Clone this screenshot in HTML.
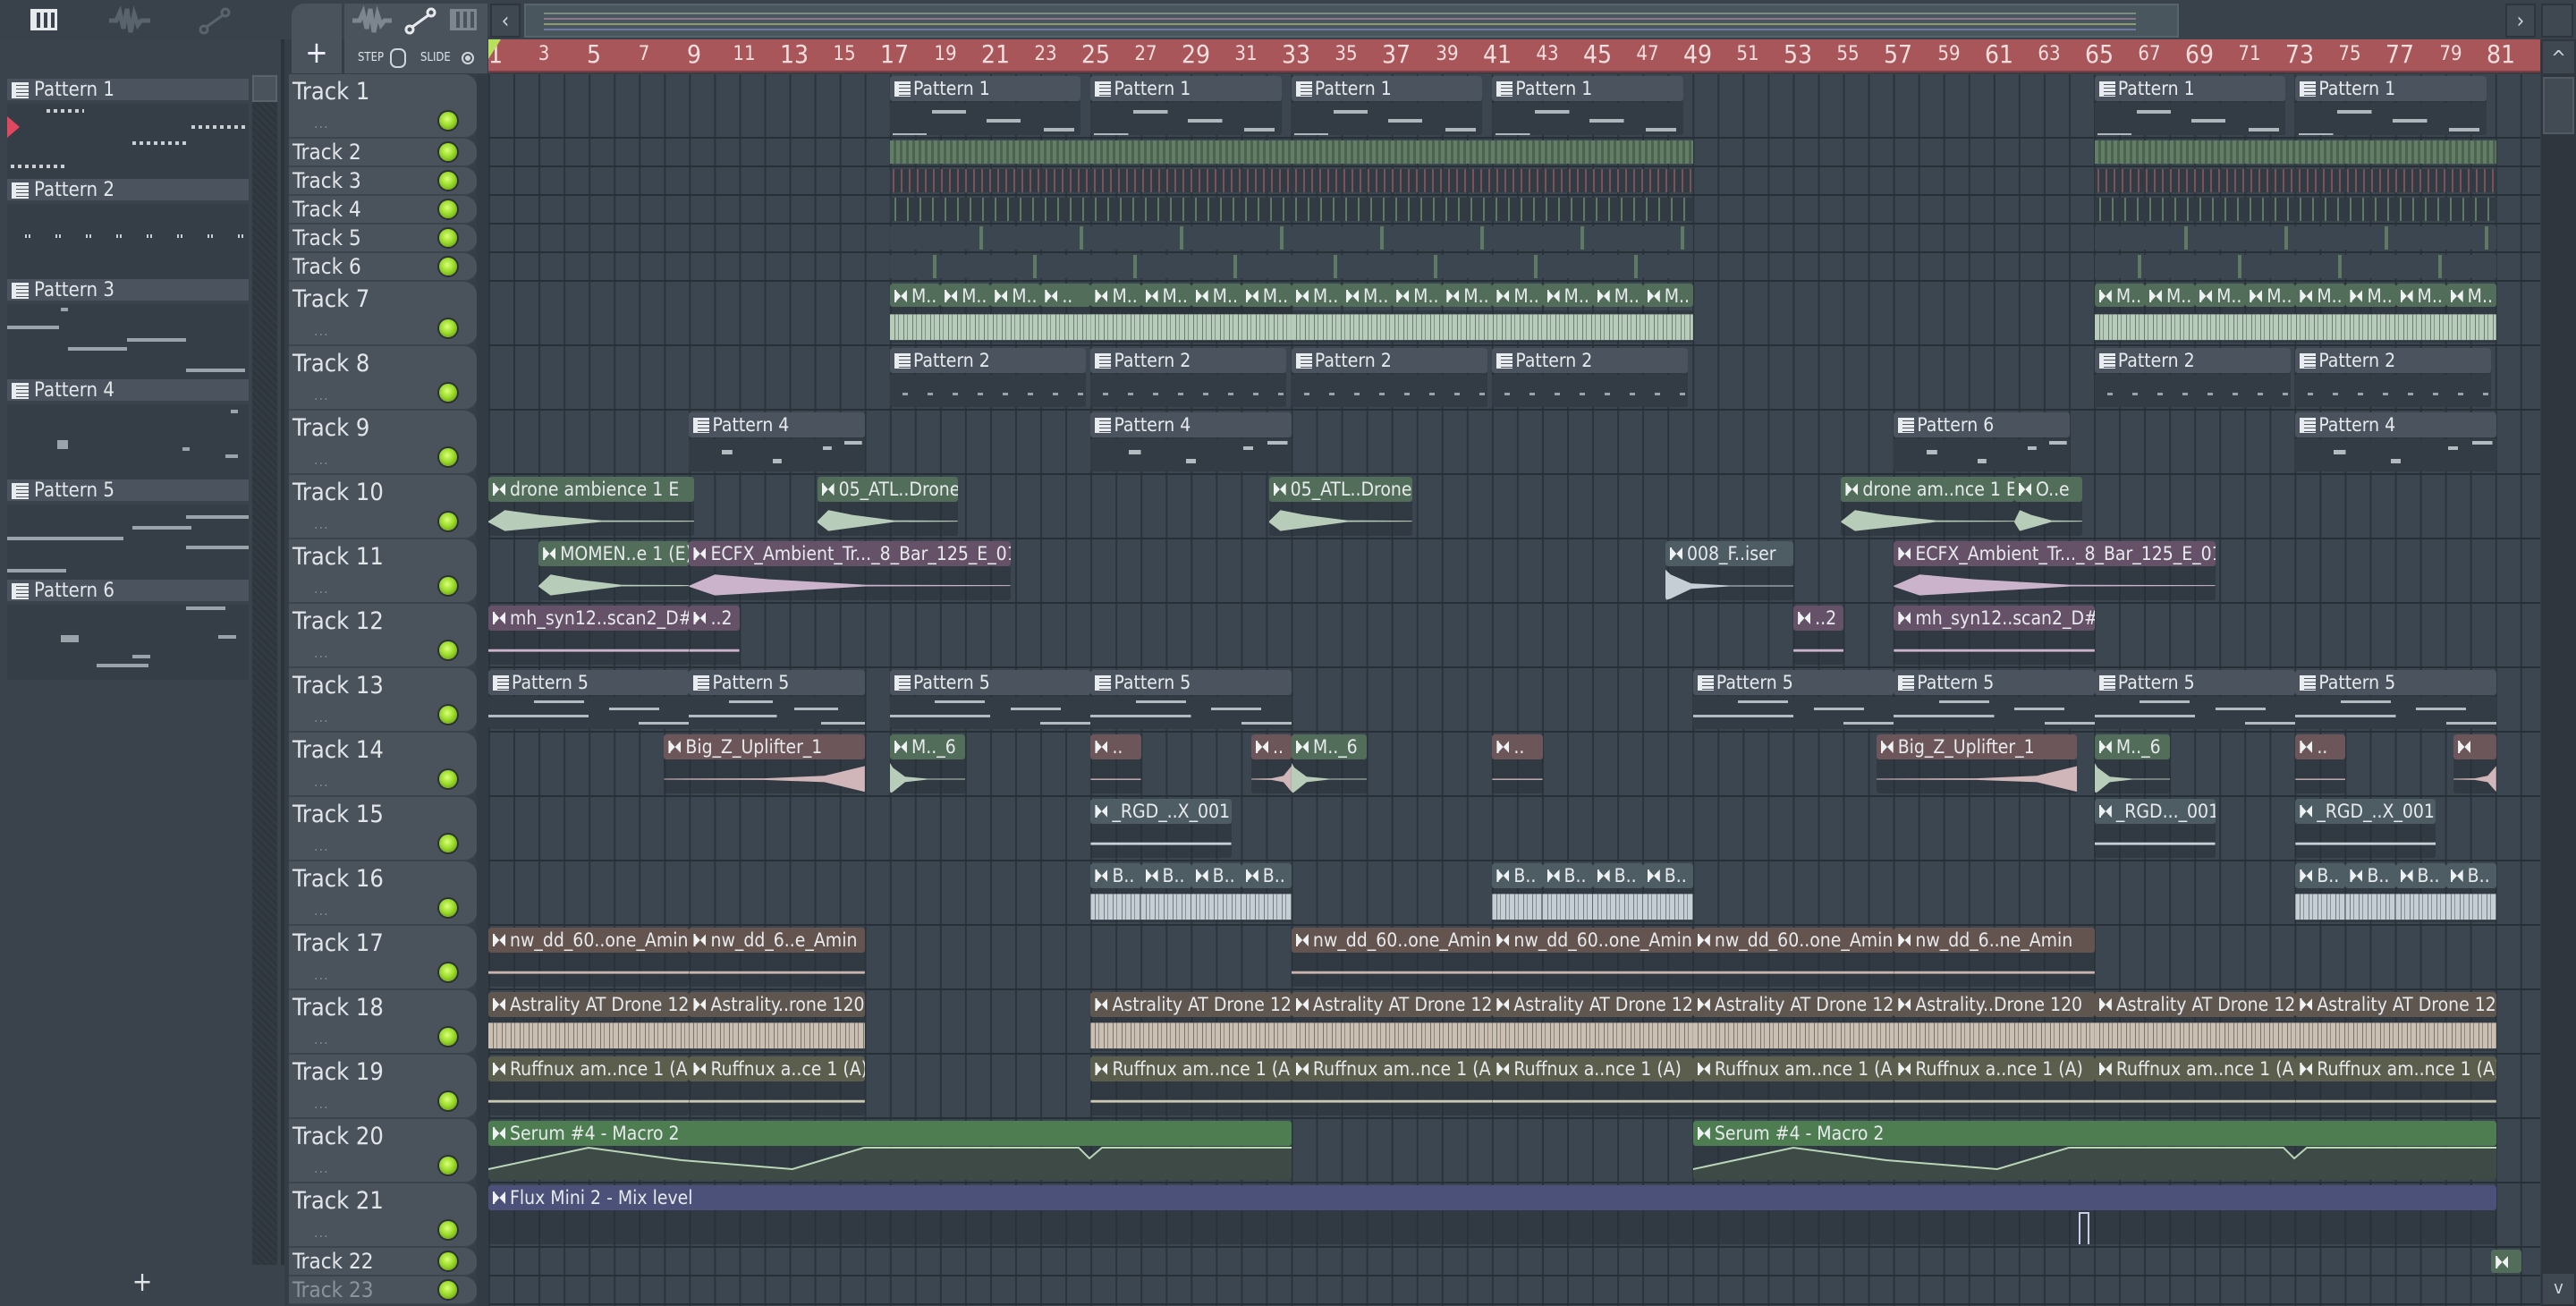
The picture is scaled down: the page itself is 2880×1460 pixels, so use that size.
<!DOCTYPE html>
<html><head><meta charset="utf-8">
<style>
*{box-sizing:border-box;margin:0;padding:0}
body{width:2880px;height:1460px;overflow:hidden;background:#353d46;font-family:"Liberation Sans Narrow","DejaVu Sans Condensed","Liberation Sans",sans-serif;font-stretch:condensed;position:relative}
.abs{position:absolute}
#top{left:0;top:0;width:2880px;height:44px;background:#39424b}
#lp{left:0;top:44px;width:318px;height:1370px;background:#3a434c;border-right:4px solid #2c333a}
.ph{position:absolute;left:8px;width:270px;height:26px;background:#4b545e;color:#e3e7ea;font-size:22px;line-height:26px;padding-left:30px;border-bottom:2px solid #3a424a}
.ph::before{content:"";position:absolute;left:5px;top:4px;width:14px;height:18px;background:repeating-linear-gradient(180deg,#e8ecef 0 3px,#4b545e 3px 4px);border-left:5px solid #e8ecef}
.pbd{position:absolute;left:8px;width:270px;height:84px;background:#353d46}
.sd{position:absolute;height:4px;background:repeating-linear-gradient(90deg,#c9ced2 0 4px,transparent 4px 8px)}
.sb{position:absolute;height:4px;background:#9aa3aa}
#hdr{left:323px;top:83px;width:212px;height:1377px}
.th{position:absolute;left:0;width:210px;background:#4a535c;border-radius:0 14px 14px 0;border-bottom:2px solid #3b434b;color:#e2e6e9;font-size:27px;padding:4px 0 0 4px}
.th.s{font-size:24px;padding-top:1px}
.th .dots{position:absolute;left:28px;bottom:6px;color:#7f878e;font-size:16px;letter-spacing:1px}
.led{position:absolute;left:168px;width:20px;height:20px;border-radius:50%;background:radial-gradient(circle at 45% 40%,#d8ff7a 0,#9bdc2a 45%,#5a8a12 100%);box-shadow:0 0 0 2px #2b3136}
#strip{left:533px;top:83px;width:13px;height:1377px;background:#323a43}
#ruler{left:546px;top:44px;width:2294px;height:37px;background:#a9565b;border-bottom:2px solid #7d3c40}
.rn{position:absolute;top:4px;color:#f3dede;font-size:22px;transform:translateX(-50%)}
.rn.b{font-size:28px;top:0px}
#g{left:546px;top:83px;width:2294px;height:1377px;background-color:#3c4650;background-image:linear-gradient(90deg,#2b333b 0 2px,transparent 2px);background-size:28.06px 100%;--b:28.06px}
.t{position:absolute;left:0;width:2294px;border-bottom:2px solid #283037}
.c{position:absolute;top:2px;bottom:2px;left:calc(var(--b)*var(--s));width:calc(var(--b)*var(--w));background:rgba(40,47,55,.55);border-radius:3px;overflow:hidden}
.h{height:28px;line-height:28px;font-size:21px;color:#e6eaec;white-space:nowrap;overflow:hidden;padding-left:24px;position:relative;border-radius:3px}
.h::before{content:"";position:absolute;left:5px;top:7px;width:14px;height:14px;background:#eef2f2;clip-path:polygon(0 0,15% 0,15% 10%,52% 50%,100% 0,100% 100%,52% 50%,15% 90%,15% 100%,0 100%)}
.p .h{background:#4b545e;padding-left:26px}
.p .h::before{clip-path:none;width:13px;height:17px;top:6px;background:repeating-linear-gradient(180deg,#e8ecef 0 3px,#4b545e 3px 4px);border-left:5px solid #e8ecef}
.gr .h{background:#526d59}.pk .h{background:#6c5659}.pu .h{background:#665268}.sl .h{background:#4e5c64}
.br .h{background:#64544f}.bg .h{background:#5f574f}.ol .h{background:#5b5e4d}
.w{position:absolute;left:0;right:0;top:30px;bottom:0}
.gr .w{background:#b8ccba}.pk .w{background:#d0b6b8}.pu .w{background:#cbb3cc}.sl .w{background:#c5ced4}
.br .w{background:#c8b4ad}.bg .w{background:#cbbfb1}.ol .w{background:#cac8b1}
.sw{clip-path:polygon(0 55%,8% 20%,25% 35%,55% 52%,100% 53%,100% 56%,55% 57%,25% 75%,8% 85%,0 58%)}
.dk{clip-path:polygon(0 5%,4% 20%,20% 48%,50% 54%,100% 54%,100% 57%,50% 57%,20% 65%,4% 95%,0 100%)}
.ri{clip-path:polygon(0 54%,50% 53%,80% 45%,100% 15%,100% 95%,80% 65%,50% 58%,0 57%)}
.bd{clip-path:polygon(0 12%,100% 12%,100% 92%,0 92%);background-image:repeating-linear-gradient(90deg,transparent 0 5px,rgba(50,60,60,.55) 5px 6px,transparent 6px 9px,rgba(50,60,60,.4) 9px 10px)!important}
.ln{clip-path:polygon(0 52%,100% 52%,100% 60%,0 60%)}
.lt{clip-path:polygon(0 54%,100% 54%,100% 58%,0 58%)}
.pb{position:absolute;left:0;right:0;top:30px;bottom:0;background:#333b44}
.n1{background:linear-gradient(#aeb6bc,#aeb6bc) 27% 8px/18% 4px no-repeat,linear-gradient(#aeb6bc,#aeb6bc) 62% 18px/18% 4px no-repeat,linear-gradient(#aeb6bc,#aeb6bc) 96% 28px/16% 4px no-repeat,linear-gradient(#aeb6bc,#aeb6bc) 2% 34px/18% 4px no-repeat,#333b44}
.n2{background:repeating-linear-gradient(90deg,transparent 0 14px,#9aa2a8 14px 20px,transparent 20px 28px) 0 20px/100% 3px no-repeat,#333b44}
.n5{background:linear-gradient(#b3bbc1,#b3bbc1) 30% 4px/25% 3px no-repeat,linear-gradient(#b3bbc1,#b3bbc1) 0 20px/50% 3px no-repeat,linear-gradient(#b3bbc1,#b3bbc1) 80% 12px/25% 3px no-repeat,linear-gradient(#b3bbc1,#b3bbc1) 100% 28px/25% 3px no-repeat,linear-gradient(#b3bbc1,#b3bbc1) 0 36px/25% 3px no-repeat,#333b44}
.n4{background:linear-gradient(#b3bbc1,#b3bbc1) 20% 12px/6% 5px no-repeat,linear-gradient(#b3bbc1,#b3bbc1) 50% 22px/5% 5px no-repeat,linear-gradient(#b3bbc1,#b3bbc1) 80% 8px/5% 4px no-repeat,linear-gradient(#b3bbc1,#b3bbc1) 98% 2px/10% 4px no-repeat,#333b44}
.st{position:absolute;top:2px;bottom:2px;left:calc(var(--b)*var(--s));width:calc(var(--b)*var(--w));background:#323a43}
</style></head><body>

<div id="top" class="abs">
 <div class="abs" style="left:34px;top:10px;width:30px;height:24px;border:3px solid #e6eaec;border-top-width:4px;background:repeating-linear-gradient(90deg,#e6eaec 0 4px,#39424b 4px 8px)"></div>
 <svg class="abs" style="left:120px;top:6px" width="50" height="34"><path d="M2 17 L10 17 L14 8 L18 26 L22 4 L26 30 L30 10 L34 22 L38 17 L48 17" stroke="#59636c" stroke-width="5" fill="none"/></svg>
 <svg class="abs" style="left:220px;top:6px" width="40" height="34"><circle cx="8" cy="27" r="4" stroke="#59636c" stroke-width="3" fill="none"/><circle cx="32" cy="8" r="4" stroke="#59636c" stroke-width="3" fill="none"/><path d="M11 24 L29 11" stroke="#59636c" stroke-width="3"/></svg>
 <div class="abs" style="left:326px;top:4px;width:56px;height:78px;background:#4a535c;border-radius:14px 0 0 0;color:#eef;font-size:34px;text-align:center;line-height:110px">+</div>
 <div class="abs" style="left:385px;top:4px;width:160px;height:78px;background:#4a535c"></div>
 <svg class="abs" style="left:392px;top:6px" width="48" height="34"><path d="M2 17 L10 17 L14 8 L18 26 L22 4 L26 30 L30 10 L34 22 L38 17 L46 17" stroke="#7d868e" stroke-width="5" fill="none"/></svg>
 <svg class="abs" style="left:450px;top:6px" width="40" height="34"><circle cx="8" cy="27" r="4" stroke="#e6eaec" stroke-width="3" fill="none"/><circle cx="32" cy="8" r="4" stroke="#e6eaec" stroke-width="3" fill="none"/><path d="M11 24 L29 11" stroke="#e6eaec" stroke-width="3"/></svg>
 <div class="abs" style="left:503px;top:10px;width:30px;height:24px;border:3px solid #7d868e;background:repeating-linear-gradient(90deg,#7d868e 0 4px,#4a535c 4px 8px)"></div>
 <div class="abs" style="left:400px;top:57px;color:#dde2e5;font-size:13px">STEP</div>
 <div class="abs" style="left:436px;top:54px;width:18px;height:22px;border:2px solid #cfd5d9;border-radius:7px"></div>
 <div class="abs" style="left:470px;top:57px;color:#dde2e5;font-size:13px">SLIDE</div>
 <div class="abs" style="left:516px;top:58px;width:14px;height:14px;border:2px solid #cfd5d9;border-radius:50%;background:radial-gradient(#cfd5d9 0 3px,transparent 3px)"></div>
 <div class="abs" style="left:548px;top:4px;width:34px;height:38px;background:#3f4851;border:2px solid #2e353c;color:#cfd5d9;font-size:24px;text-align:center;line-height:34px">‹</div>
 <div class="abs" style="left:586px;top:4px;width:1850px;height:38px;background:#4a565d;border:2px solid #56646b">
  <div class="abs" style="left:20px;top:8px;width:1780px;height:2px;background:#7f8c80"></div>
  <div class="abs" style="left:20px;top:14px;width:1780px;height:2px;background:#8a7a88"></div>
  <div class="abs" style="left:20px;top:20px;width:1780px;height:2px;background:#8f9a72"></div>
  <div class="abs" style="left:20px;top:26px;width:1780px;height:2px;background:#6e7aa0"></div>
 </div>
 <div class="abs" style="left:2801px;top:4px;width:34px;height:38px;background:#3f4851;border:2px solid #2e353c;color:#cfd5d9;font-size:24px;text-align:center;line-height:34px">›</div>
 <div class="abs" style="left:2841px;top:4px;width:36px;height:38px;background:#3f4851;border:2px solid #2e353c"></div>
</div>

<div id="lp" class="abs">
 <div class="abs" style="left:282px;top:40px;width:28px;height:1330px;background:repeating-linear-gradient(45deg,#323a42 0 3px,#2e353d 3px 6px)"></div>
 <div class="abs" style="left:282px;top:40px;width:28px;height:30px;background:#4a535c;border:2px solid #5a636c"></div>
</div>
<div class="abs" style="left:0;top:1414px;width:318px;height:46px;background:#3a434c;color:#dfe3e6;font-size:30px;text-align:center;line-height:40px">+</div>

<div class="ph" style="top:88px">Pattern 1</div><div class="pbd" style="top:116px">
 <div class="sd" style="left:44px;top:6px;width:42px"></div><div class="sd" style="left:206px;top:24px;width:64px"></div><div class="sd" style="left:140px;top:42px;width:64px"></div><div class="sd" style="left:4px;top:68px;width:64px"></div></div>
<div class="ph" style="top:200px">Pattern 2</div><div class="pbd" style="top:228px"><div class="sd" style="left:20px;top:34px;width:250px;background:repeating-linear-gradient(90deg,#c9ced2 0 2px,transparent 2px 4px,#c9ced2 4px 6px,transparent 6px 34px)"></div></div>
<div class="ph" style="top:312px">Pattern 3</div><div class="pbd" style="top:340px"><div class="sb" style="left:60px;top:4px;width:8px"></div><div class="sb" style="left:0;top:24px;width:58px"></div><div class="sb" style="left:134px;top:38px;width:66px"></div><div class="sb" style="left:68px;top:48px;width:66px"></div><div class="sb" style="left:200px;top:72px;width:66px"></div></div>
<div class="ph" style="top:424px">Pattern 4</div><div class="pbd" style="top:452px"><div class="sb" style="left:250px;top:6px;width:8px"></div><div class="sb" style="left:56px;top:40px;width:12px;height:10px"></div><div class="sb" style="left:196px;top:48px;width:8px"></div><div class="sb" style="left:244px;top:56px;width:14px"></div></div>
<div class="ph" style="top:536px">Pattern 5</div><div class="pbd" style="top:564px"><div class="sb" style="left:200px;top:12px;width:70px"></div><div class="sb" style="left:140px;top:24px;width:66px"></div><div class="sb" style="left:0;top:36px;width:130px"></div><div class="sb" style="left:200px;top:46px;width:70px"></div><div class="sb" style="left:0;top:72px;width:66px"></div></div>
<div class="ph" style="top:648px">Pattern 6</div><div class="pbd" style="top:676px"><div class="sb" style="left:200px;top:2px;width:44px"></div><div class="sb" style="left:60px;top:34px;width:20px;height:8px"></div><div class="sb" style="left:236px;top:34px;width:20px"></div><div class="sb" style="left:140px;top:56px;width:20px"></div><div class="sb" style="left:100px;top:66px;width:58px"></div></div>
<div class="abs" style="left:8px;top:130px;width:0;height:0;border-top:12px solid transparent;border-bottom:12px solid transparent;border-left:14px solid #e04860"></div>

<div id="ruler" class="abs">
 <span class="rn b" style="left:8px">1</span><span class="rn" style="left:62px">3</span><span class="rn b" style="left:118px">5</span><span class="rn" style="left:174px">7</span><span class="rn b" style="left:230px">9</span><span class="rn" style="left:286px">11</span><span class="rn b" style="left:342px">13</span><span class="rn" style="left:398px">15</span><span class="rn b" style="left:454px">17</span><span class="rn" style="left:511px">19</span><span class="rn b" style="left:567px">21</span><span class="rn" style="left:623px">23</span><span class="rn b" style="left:679px">25</span><span class="rn" style="left:735px">27</span><span class="rn b" style="left:791px">29</span><span class="rn" style="left:847px">31</span><span class="rn b" style="left:903px">33</span><span class="rn" style="left:959px">35</span><span class="rn b" style="left:1015px">37</span><span class="rn" style="left:1072px">39</span><span class="rn b" style="left:1128px">41</span><span class="rn" style="left:1184px">43</span><span class="rn b" style="left:1240px">45</span><span class="rn" style="left:1296px">47</span><span class="rn b" style="left:1352px">49</span><span class="rn" style="left:1408px">51</span><span class="rn b" style="left:1464px">53</span><span class="rn" style="left:1520px">55</span><span class="rn b" style="left:1576px">57</span><span class="rn" style="left:1633px">59</span><span class="rn b" style="left:1689px">61</span><span class="rn" style="left:1745px">63</span><span class="rn b" style="left:1801px">65</span><span class="rn" style="left:1857px">67</span><span class="rn b" style="left:1913px">69</span><span class="rn" style="left:1969px">71</span><span class="rn b" style="left:2025px">73</span><span class="rn" style="left:2081px">75</span><span class="rn b" style="left:2137px">77</span><span class="rn" style="left:2194px">79</span><span class="rn b" style="left:2250px">81</span>
 <div class="abs" style="left:0;top:0;width:0;height:0;border-left:14px solid #b8e05a;border-bottom:22px solid transparent"></div>
</div>
<div class="abs" style="left:2841px;top:44px;width:39px;height:1416px;background:#2f363d"></div>
<div class="abs" style="left:2843px;top:46px;width:35px;height:36px;background:#3f4851;color:#cfd5d9;font-size:22px;text-align:center;line-height:40px">^</div>
<div class="abs" style="left:2843px;top:86px;width:35px;height:64px;background:#424b54;border:2px solid #525b64"></div>
<div class="abs" style="left:2843px;top:1424px;width:35px;height:34px;background:#3f4851;color:#cfd5d9;font-size:20px;text-align:center;line-height:30px">v</div>

<div id="strip" class="abs"></div>

<div id="hdr" class="abs">
 <div class="th" style="top:0;height:72px">Track 1<span class="dots">...</span><i class="led" style="top:42px"></i></div>
 <div class="th s" style="top:72px;height:32px">Track 2<i class="led" style="top:5px"></i></div>
 <div class="th s" style="top:104px;height:32px">Track 3<i class="led" style="top:5px"></i></div>
 <div class="th s" style="top:136px;height:32px">Track 4<i class="led" style="top:5px"></i></div>
 <div class="th s" style="top:168px;height:32px">Track 5<i class="led" style="top:5px"></i></div>
 <div class="th s" style="top:200px;height:32px">Track 6<i class="led" style="top:5px"></i></div>
 <div class="th" style="top:232px;height:72px">Track 7<span class="dots">...</span><i class="led" style="top:42px"></i></div>
 <div class="th" style="top:304px;height:72px">Track 8<span class="dots">...</span><i class="led" style="top:42px"></i></div>
 <div class="th" style="top:376px;height:72px">Track 9<span class="dots">...</span><i class="led" style="top:42px"></i></div>
 <div class="th" style="top:448px;height:72px">Track 10<span class="dots">...</span><i class="led" style="top:42px"></i></div>
 <div class="th" style="top:520px;height:72px">Track 11<span class="dots">...</span><i class="led" style="top:42px"></i></div>
 <div class="th" style="top:592px;height:72px">Track 12<span class="dots">...</span><i class="led" style="top:42px"></i></div>
 <div class="th" style="top:664px;height:72px">Track 13<span class="dots">...</span><i class="led" style="top:42px"></i></div>
 <div class="th" style="top:736px;height:72px">Track 14<span class="dots">...</span><i class="led" style="top:42px"></i></div>
 <div class="th" style="top:808px;height:72px">Track 15<span class="dots">...</span><i class="led" style="top:42px"></i></div>
 <div class="th" style="top:880px;height:72px">Track 16<span class="dots">...</span><i class="led" style="top:42px"></i></div>
 <div class="th" style="top:952px;height:72px">Track 17<span class="dots">...</span><i class="led" style="top:42px"></i></div>
 <div class="th" style="top:1024px;height:72px">Track 18<span class="dots">...</span><i class="led" style="top:42px"></i></div>
 <div class="th" style="top:1096px;height:72px">Track 19<span class="dots">...</span><i class="led" style="top:42px"></i></div>
 <div class="th" style="top:1168px;height:72px">Track 20<span class="dots">...</span><i class="led" style="top:42px"></i></div>
 <div class="th" style="top:1240px;height:72px">Track 21<span class="dots">...</span><i class="led" style="top:42px"></i></div>
 <div class="th s" style="top:1312px;height:32px">Track 22<i class="led" style="top:5px"></i></div>
 <div class="th s" style="top:1344px;height:32px;color:#8a939a">Track 23<i class="led" style="top:5px"></i></div>
</div>

<div id="g" class="abs">
 <div class="t" style="top:0;height:72px">
  <div class="c p" style="--s:16;--w:7.6"><div class="h">Pattern 1</div><div class="pb n1"></div></div>
  <div class="c p" style="--s:24;--w:7.6"><div class="h">Pattern 1</div><div class="pb n1"></div></div>
  <div class="c p" style="--s:32;--w:7.6"><div class="h">Pattern 1</div><div class="pb n1"></div></div>
  <div class="c p" style="--s:40;--w:7.6"><div class="h">Pattern 1</div><div class="pb n1"></div></div>
  <div class="c p" style="--s:64;--w:7.6"><div class="h">Pattern 1</div><div class="pb n1"></div></div>
  <div class="c p" style="--s:72;--w:7.6"><div class="h">Pattern 1</div><div class="pb n1"></div></div>
 </div>
 <div class="t" style="top:72px;height:32px">
  <div class="st" style="--s:16;--w:32;background:repeating-linear-gradient(90deg,#627e66 0 4px,#4c6350 4px 7px)"></div>
  <div class="st" style="--s:64;--w:16;background:repeating-linear-gradient(90deg,#627e66 0 4px,#4c6350 4px 7px)"></div>
 </div>
 <div class="t" style="top:104px;height:32px">
  <div class="st" style="--s:16;--w:32;background:repeating-linear-gradient(90deg,#323a43 0 3px,#7a5258 3px 5px,#323a43 5px 9px)"></div>
  <div class="st" style="--s:64;--w:16;background:repeating-linear-gradient(90deg,#323a43 0 3px,#7a5258 3px 5px,#323a43 5px 9px)"></div>
 </div>
 <div class="t" style="top:136px;height:32px">
  <div class="st" style="--s:16;--w:32;background:repeating-linear-gradient(90deg,#323a43 0 5px,#5f7a62 5px 7px,#323a43 7px 14px)"></div>
  <div class="st" style="--s:64;--w:16;background:repeating-linear-gradient(90deg,#323a43 0 5px,#5f7a62 5px 7px,#323a43 7px 14px)"></div>
 </div>
 <div class="t" style="top:168px;height:32px">
  <div class="st" style="--s:16;--w:32;background:repeating-linear-gradient(90deg,#3c4650 0 100px,#5f7a62 100px 104px,#3c4650 104px 112px)"></div>
  <div class="st" style="--s:64;--w:16;background:repeating-linear-gradient(90deg,#3c4650 0 100px,#5f7a62 100px 104px,#3c4650 104px 112px)"></div>
 </div>
 <div class="t" style="top:200px;height:32px">
  <div class="st" style="--s:16;--w:32;background:repeating-linear-gradient(90deg,#3c4650 0 48px,#5f7a62 48px 52px,#3c4650 52px 112px)"></div>
  <div class="st" style="--s:64;--w:16;background:repeating-linear-gradient(90deg,#3c4650 0 48px,#5f7a62 48px 52px,#3c4650 52px 112px)"></div>
 </div>
 <div class="t" style="top:232px;height:72px">
  <div class="c gr" style="--s:16;--w:16"><div class="w bd"></div></div>
  <div class="c gr" style="--s:24;--w:8"><div class="w bd"></div></div>
  <div class="c gr" style="--s:64;--w:16"><div class="w bd"></div></div>
  <div class="c gr" style="--s:16;--w:2;bottom:42px"><div class="h">M..</div></div><div class="c gr" style="--s:18;--w:2;bottom:42px"><div class="h">M..</div></div><div class="c gr" style="--s:20;--w:2;bottom:42px"><div class="h">M..</div></div><div class="c gr" style="--s:22;--w:2;bottom:42px"><div class="h">..</div></div>
  <div class="c gr" style="--s:24;--w:2;bottom:42px"><div class="h">M..</div></div><div class="c gr" style="--s:26;--w:2;bottom:42px"><div class="h">M..</div></div><div class="c gr" style="--s:28;--w:2;bottom:42px"><div class="h">M..</div></div><div class="c gr" style="--s:30;--w:2;bottom:42px"><div class="h">M..</div></div>
  <div class="c gr" style="--s:32;--w:2;bottom:42px"><div class="h">M..</div></div><div class="c gr" style="--s:34;--w:2;bottom:42px"><div class="h">M..</div></div><div class="c gr" style="--s:36;--w:2;bottom:42px"><div class="h">M..</div></div><div class="c gr" style="--s:38;--w:2;bottom:42px"><div class="h">M..</div></div>
  <div class="c gr" style="--s:40;--w:2;bottom:42px"><div class="h">M..</div></div><div class="c gr" style="--s:42;--w:2;bottom:42px"><div class="h">M..</div></div><div class="c gr" style="--s:44;--w:2;bottom:42px"><div class="h">M..</div></div><div class="c gr" style="--s:46;--w:2;bottom:42px"><div class="h">M..</div></div>
  <div class="c gr" style="--s:32;--w:16;top:32px"><div class="w bd" style="top:0"></div></div>
  <div class="c gr" style="--s:64;--w:2;bottom:42px"><div class="h">M..</div></div><div class="c gr" style="--s:66;--w:2;bottom:42px"><div class="h">M..</div></div><div class="c gr" style="--s:68;--w:2;bottom:42px"><div class="h">M..</div></div><div class="c gr" style="--s:70;--w:2;bottom:42px"><div class="h">M..</div></div>
  <div class="c gr" style="--s:72;--w:2;bottom:42px"><div class="h">M..</div></div><div class="c gr" style="--s:74;--w:2;bottom:42px"><div class="h">M..</div></div><div class="c gr" style="--s:76;--w:2;bottom:42px"><div class="h">M..</div></div><div class="c gr" style="--s:78;--w:2;bottom:42px"><div class="h">M..</div></div>
 </div>
 <div class="t" style="top:304px;height:72px">
  <div class="c p" style="--s:16;--w:7.8"><div class="h">Pattern 2</div><div class="pb n2"></div></div>
  <div class="c p" style="--s:24;--w:7.8"><div class="h">Pattern 2</div><div class="pb n2"></div></div>
  <div class="c p" style="--s:32;--w:7.8"><div class="h">Pattern 2</div><div class="pb n2"></div></div>
  <div class="c p" style="--s:40;--w:7.8"><div class="h">Pattern 2</div><div class="pb n2"></div></div>
  <div class="c p" style="--s:64;--w:7.8"><div class="h">Pattern 2</div><div class="pb n2"></div></div>
  <div class="c p" style="--s:72;--w:7.8"><div class="h">Pattern 2</div><div class="pb n2"></div></div>
 </div>
 <div class="t" style="top:376px;height:72px">
  <div class="c p" style="--s:8;--w:7"><div class="h">Pattern 4</div><div class="pb n4"></div></div>
  <div class="c p" style="--s:24;--w:8"><div class="h">Pattern 4</div><div class="pb n4"></div></div>
  <div class="c p" style="--s:56;--w:7"><div class="h">Pattern 6</div><div class="pb n4"></div></div>
  <div class="c p" style="--s:72;--w:8"><div class="h">Pattern 4</div><div class="pb n4"></div></div>
 </div>
 <div class="t" style="top:448px;height:72px">
  <div class="c gr" style="--s:0;--w:8.2"><div class="h">drone ambience 1 E</div><div class="w sw"></div></div>
  <div class="c gr" style="--s:13.1;--w:5.6"><div class="h">05_ATL..Drone</div><div class="w sw"></div></div>
  <div class="c gr" style="--s:31.1;--w:5.7"><div class="h">05_ATL..Drone</div><div class="w sw"></div></div>
  <div class="c gr" style="--s:53.9;--w:6.9"><div class="h">drone am..nce 1 E</div><div class="w sw"></div></div>
  <div class="c gr" style="--s:60.8;--w:2.7"><div class="h">O..e</div><div class="w sw"></div></div>
 </div>
 <div class="t" style="top:520px;height:72px">
  <div class="c gr" style="--s:2;--w:6"><div class="h">MOMEN..e 1 (E)</div><div class="w sw"></div></div>
  <div class="c pu" style="--s:8;--w:12.8"><div class="h">ECFX_Ambient_Tr..._8_Bar_125_E_01</div><div class="w sw"></div></div>
  <div class="c sl" style="--s:46.9;--w:5.1"><div class="h">008_F..iser</div><div class="w dk"></div></div>
  <div class="c pu" style="--s:56;--w:12.8"><div class="h">ECFX_Ambient_Tr..._8_Bar_125_E_01</div><div class="w sw"></div></div>
 </div>
 <div class="t" style="top:592px;height:72px">
  <div class="c pu" style="--s:0;--w:8"><div class="h">mh_syn12..scan2_D#</div><div class="w ln"></div></div>
  <div class="c pu" style="--s:8;--w:2"><div class="h">..2</div><div class="w ln"></div></div>
  <div class="c pu" style="--s:52;--w:2"><div class="h">..2</div><div class="w ln"></div></div>
  <div class="c pu" style="--s:56;--w:8"><div class="h">mh_syn12..scan2_D#</div><div class="w ln"></div></div>
 </div>
 <div class="t" style="top:664px;height:72px">
  <div class="c p" style="--s:0;--w:8"><div class="h">Pattern 5</div><div class="pb n5"></div></div>
  <div class="c p" style="--s:8;--w:7"><div class="h">Pattern 5</div><div class="pb n5"></div></div>
  <div class="c p" style="--s:16;--w:8"><div class="h">Pattern 5</div><div class="pb n5"></div></div>
  <div class="c p" style="--s:24;--w:8"><div class="h">Pattern 5</div><div class="pb n5"></div></div>
  <div class="c p" style="--s:48;--w:8"><div class="h">Pattern 5</div><div class="pb n5"></div></div>
  <div class="c p" style="--s:56;--w:8"><div class="h">Pattern 5</div><div class="pb n5"></div></div>
  <div class="c p" style="--s:64;--w:8"><div class="h">Pattern 5</div><div class="pb n5"></div></div>
  <div class="c p" style="--s:72;--w:8"><div class="h">Pattern 5</div><div class="pb n5"></div></div>
 </div>
 <div class="t" style="top:736px;height:72px">
  <div class="c pk" style="--s:7;--w:8"><div class="h">Big_Z_Uplifter_1</div><div class="w ri"></div></div>
  <div class="c gr" style="--s:16;--w:3"><div class="h">M.._6</div><div class="w dk"></div></div>
  <div class="c pk" style="--s:24;--w:2"><div class="h">..</div><div class="w lt"></div></div>
  <div class="c pk" style="--s:30.4;--w:1.6"><div class="h">..</div><div class="w ri"></div></div>
  <div class="c gr" style="--s:32;--w:3"><div class="h">M.._6</div><div class="w dk"></div></div>
  <div class="c pk" style="--s:40;--w:2"><div class="h">..</div><div class="w lt"></div></div>
  <div class="c pk" style="--s:55.3;--w:8"><div class="h">Big_Z_Uplifter_1</div><div class="w ri"></div></div>
  <div class="c gr" style="--s:64;--w:3"><div class="h">M.._6</div><div class="w dk"></div></div>
  <div class="c pk" style="--s:72;--w:2"><div class="h">..</div><div class="w lt"></div></div>
  <div class="c pk" style="--s:78.3;--w:1.7"><div class="h"></div><div class="w ri"></div></div>
 </div>
 <div class="t" style="top:808px;height:72px">
  <div class="c sl" style="--s:24;--w:5.6"><div class="h">_RGD_..X_001</div><div class="w ln"></div></div>
  <div class="c sl" style="--s:64;--w:4.8"><div class="h">_RGD..._001</div><div class="w ln"></div></div>
  <div class="c sl" style="--s:72;--w:5.6"><div class="h">_RGD_..X_001</div><div class="w ln"></div></div>
 </div>
 <div class="t" style="top:880px;height:72px">
  <div class="c sl" style="--s:24;--w:2"><div class="h">B..</div><div class="w bd"></div></div><div class="c sl" style="--s:26;--w:2"><div class="h">B..</div><div class="w bd"></div></div><div class="c sl" style="--s:28;--w:2"><div class="h">B..</div><div class="w bd"></div></div><div class="c sl" style="--s:30;--w:2"><div class="h">B..</div><div class="w bd"></div></div>
  <div class="c sl" style="--s:40;--w:2"><div class="h">B..</div><div class="w bd"></div></div><div class="c sl" style="--s:42;--w:2"><div class="h">B..</div><div class="w bd"></div></div><div class="c sl" style="--s:44;--w:2"><div class="h">B..</div><div class="w bd"></div></div><div class="c sl" style="--s:46;--w:2"><div class="h">B..</div><div class="w bd"></div></div>
  <div class="c sl" style="--s:72;--w:2"><div class="h">B..</div><div class="w bd"></div></div><div class="c sl" style="--s:74;--w:2"><div class="h">B..</div><div class="w bd"></div></div><div class="c sl" style="--s:76;--w:2"><div class="h">B..</div><div class="w bd"></div></div><div class="c sl" style="--s:78;--w:2"><div class="h">B..</div><div class="w bd"></div></div>
 </div>
 <div class="t" style="top:952px;height:72px">
  <div class="c br" style="--s:0;--w:8"><div class="h">nw_dd_60..one_Amin</div><div class="w ln"></div></div>
  <div class="c br" style="--s:8;--w:7"><div class="h">nw_dd_6..e_Amin</div><div class="w ln"></div></div>
  <div class="c br" style="--s:32;--w:8"><div class="h">nw_dd_60..one_Amin</div><div class="w ln"></div></div>
  <div class="c br" style="--s:40;--w:8"><div class="h">nw_dd_60..one_Amin</div><div class="w ln"></div></div>
  <div class="c br" style="--s:48;--w:8"><div class="h">nw_dd_60..one_Amin</div><div class="w ln"></div></div>
  <div class="c br" style="--s:56;--w:8"><div class="h">nw_dd_6..ne_Amin</div><div class="w ln"></div></div>
 </div>
 <div class="t" style="top:1024px;height:72px">
  <div class="c bg" style="--s:0;--w:8"><div class="h">Astrality AT Drone 120</div><div class="w bd"></div></div>
  <div class="c bg" style="--s:8;--w:7"><div class="h">Astrality..rone 120</div><div class="w bd"></div></div>
  <div class="c bg" style="--s:24;--w:8"><div class="h">Astrality AT Drone 120</div><div class="w bd"></div></div>
  <div class="c bg" style="--s:32;--w:8"><div class="h">Astrality AT Drone 120</div><div class="w bd"></div></div>
  <div class="c bg" style="--s:40;--w:8"><div class="h">Astrality AT Drone 120</div><div class="w bd"></div></div>
  <div class="c bg" style="--s:48;--w:8"><div class="h">Astrality AT Drone 120</div><div class="w bd"></div></div>
  <div class="c bg" style="--s:56;--w:8"><div class="h">Astrality..Drone 120</div><div class="w bd"></div></div>
  <div class="c bg" style="--s:64;--w:8"><div class="h">Astrality AT Drone 120</div><div class="w bd"></div></div>
  <div class="c bg" style="--s:72;--w:8"><div class="h">Astrality AT Drone 120</div><div class="w bd"></div></div>
 </div>
 <div class="t" style="top:1096px;height:72px">
  <div class="c ol" style="--s:0;--w:8"><div class="h">Ruffnux am..nce 1 (A)</div><div class="w ln"></div></div>
  <div class="c ol" style="--s:8;--w:7"><div class="h">Ruffnux a..ce 1 (A)</div><div class="w ln"></div></div>
  <div class="c ol" style="--s:24;--w:8"><div class="h">Ruffnux am..nce 1 (A)</div><div class="w ln"></div></div>
  <div class="c ol" style="--s:32;--w:8"><div class="h">Ruffnux am..nce 1 (A)</div><div class="w ln"></div></div>
  <div class="c ol" style="--s:40;--w:8"><div class="h">Ruffnux a..nce 1 (A)</div><div class="w ln"></div></div>
  <div class="c ol" style="--s:48;--w:8"><div class="h">Ruffnux am..nce 1 (A)</div><div class="w ln"></div></div>
  <div class="c ol" style="--s:56;--w:8"><div class="h">Ruffnux a..nce 1 (A)</div><div class="w ln"></div></div>
  <div class="c ol" style="--s:64;--w:8"><div class="h">Ruffnux am..nce 1 (A)</div><div class="w ln"></div></div>
  <div class="c ol" style="--s:72;--w:8"><div class="h">Ruffnux am..nce 1 (A)</div><div class="w ln"></div></div>
 </div>
 <div class="t" style="top:1168px;height:72px">
  <div class="c" style="--s:0;--w:32"><div class="h" style="background:#4f7d52">Serum #4 - Macro 2</div>
   <svg class="abs" style="left:0;top:28px" width="898" height="40" viewBox="0 0 898 40" preserveAspectRatio="none"><polygon points="0,26 112,2 216,16 340,26 420,2 660,2 672,14 686,2 898,2 898,40 0,40" fill="#3d4a46"/><polyline points="0,26 112,2 216,16 340,26 420,2 660,2 672,14 686,2 898,2" stroke="#b9d6b6" stroke-width="2" fill="none"/></svg></div>
  <div class="c" style="--s:48;--w:32"><div class="h" style="background:#4f7d52">Serum #4 - Macro 2</div>
   <svg class="abs" style="left:0;top:28px" width="898" height="40" viewBox="0 0 898 40" preserveAspectRatio="none"><polygon points="0,26 112,2 216,16 340,26 420,2 660,2 672,14 686,2 898,2 898,40 0,40" fill="#3d4a46"/><polyline points="0,26 112,2 216,16 340,26 420,2 660,2 672,14 686,2 898,2" stroke="#b9d6b6" stroke-width="2" fill="none"/></svg></div>
 </div>
 <div class="t" style="top:1240px;height:72px">
  <div class="c" style="--s:0;--w:80"><div class="h" style="background:#4b5179">Flux Mini 2 - Mix level</div>
   <div class="abs" style="left:0;right:0;top:66px;height:2px;background:#c8cde8"></div>
   <div class="abs" style="left:1778px;top:30px;width:12px;height:36px;border:2px solid #c8cde8;border-bottom:none"></div></div>
 </div>
 <div class="t" style="top:1312px;height:32px">
  <div class="c gr" style="--s:79.8;--w:1.2"><div class="h"></div></div>
 </div>
 <div class="t" style="top:1344px;height:32px"></div>
</div>
</body></html>
